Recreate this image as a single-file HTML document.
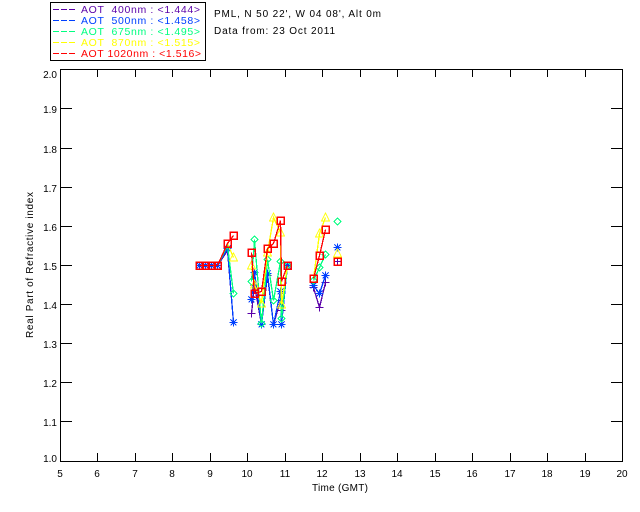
<!DOCTYPE html>
<html>
<head>
<meta charset="utf-8">
<style>
html,body{margin:0;padding:0;background:#fff;width:640px;height:512px;overflow:hidden}
svg{display:block}
text{font-family:"Liberation Sans",sans-serif;font-size:10px;fill:#000;white-space:pre}
.lg{font-size:10.5px}
</style>
</head>
<body>
<svg width="640" height="512" viewBox="0 0 640 512" xmlns="http://www.w3.org/2000/svg" shape-rendering="crispEdges" fill="none">
<defs>
<g id="plus"><path d="M-4 0H4M0 -4V4"/></g>
<g id="star"><path d="M-4 0H4M0 -4V4M-3 -3L3 3M-3 3L3 -3"/></g>
<g id="dia"><path d="M0 -3.5L3.5 0L0 3.5L-3.5 0Z"/></g>
<g id="tri"><path d="M0 -4.5L4 3.5H-4Z"/></g>
<g id="sq"><rect x="-3.5" y="-3.5" width="7" height="7" stroke-width="1.5"/></g>
</defs>

<!-- legend -->
<rect x="50.5" y="2.5" width="155" height="58" stroke="#000"/>
<g stroke-width="1">
<path d="M53 9.5H75" stroke="#5a00a8" stroke-dasharray="6 2"/>
<path d="M53 20.5H75" stroke="#0040ff" stroke-dasharray="6 2"/>
<path d="M53 31.5H75" stroke="#00ff80" stroke-dasharray="6 2"/>
<path d="M53 42.5H75" stroke="#ffff00" stroke-dasharray="6 2"/>
<path d="M53 53.5H75" stroke="#ff0000" stroke-dasharray="6 2"/>
</g>
<text class="lg" x="81" y="13" textLength="119" style="fill:#5a00a8">AOT  400nm : &lt;1.444&gt;</text>
<text class="lg" x="81" y="24" textLength="119" style="fill:#0040ff">AOT  500nm : &lt;1.458&gt;</text>
<text class="lg" x="81" y="35" textLength="119" style="fill:#00ff80">AOT  675nm : &lt;1.495&gt;</text>
<text class="lg" x="81" y="46" textLength="119" style="fill:#ffff00">AOT  870nm : &lt;1.515&gt;</text>
<text class="lg" x="81" y="57" textLength="120" style="fill:#ff0000">AOT 1020nm : &lt;1.516&gt;</text>

<text x="214" y="17" textLength="167">PML, N 50 22', W 04 08', Alt 0m</text>
<text x="214" y="34" textLength="121">Data from: 23 Oct 2011</text>

<!-- axes -->
<rect x="60.5" y="69.5" width="562" height="392" stroke="#000"/>
<path stroke="#000" d="M97.5 70V77M135.5 70V77M172.5 70V77M210.5 70V77M247.5 70V77M285.5 70V77M322.5 70V77M360.5 70V77M397.5 70V77M435.5 70V77M472.5 70V77M510.5 70V77M547.5 70V77M585.5 70V77
M97.5 461V453M135.5 461V453M172.5 461V453M210.5 461V453M247.5 461V453M285.5 461V453M322.5 461V453M360.5 461V453M397.5 461V453M435.5 461V453M472.5 461V453M510.5 461V453M547.5 461V453M585.5 461V453
M61 108.5H72M61 148.5H72M61 187.5H72M61 226.5H72M61 265.5H72M61 304.5H72M61 343.5H72M61 382.5H72M61 421.5H72
M622 108.5H611M622 148.5H611M622 187.5H611M622 226.5H611M622 265.5H611M622 304.5H611M622 343.5H611M622 382.5H611M622 421.5H611"/>

<g text-anchor="end">
<text x="57" y="78">2.0</text>
<text x="57" y="113">1.9</text>
<text x="57" y="153">1.8</text>
<text x="57" y="192">1.7</text>
<text x="57" y="231">1.6</text>
<text x="57" y="270">1.5</text>
<text x="57" y="309">1.4</text>
<text x="57" y="348">1.3</text>
<text x="57" y="387">1.2</text>
<text x="57" y="426">1.1</text>
<text x="57" y="462">1.0</text>
</g>
<g text-anchor="middle">
<text x="60" y="477">5</text><text x="97" y="477">6</text><text x="135" y="477">7</text><text x="172" y="477">8</text>
<text x="210" y="477">9</text><text x="247" y="477">10</text><text x="285" y="477">11</text><text x="322" y="477">12</text>
<text x="360" y="477">13</text><text x="397" y="477">14</text><text x="435" y="477">15</text><text x="472" y="477">16</text>
<text x="510" y="477">17</text><text x="547" y="477">18</text><text x="585" y="477">19</text><text x="622" y="477">20</text>
<text x="340" y="491" textLength="56">Time (GMT)</text>
<text transform="translate(33 265) rotate(-90)" textLength="146">Real Part of Refractive index</text>
</g>

<g transform="translate(.5 .5)">
<!-- purple 400 -->
<g stroke="#5a00a8">
<g stroke-width="1.3">
<polyline points="199,265 217,265 227,250 233,322"/>
<polyline points="251,313 254,285 261,324 267,275 273,324 280,300 281,310 287,265"/>
<polyline points="313,287 319,307 325,282"/>
</g>
<use href="#plus" x="251" y="313"/><use href="#plus" x="254" y="285"/><use href="#plus" x="267" y="275"/><use href="#plus" x="280" y="300"/><use href="#plus" x="281" y="310"/>
<use href="#plus" x="313" y="287"/><use href="#plus" x="319" y="307"/><use href="#plus" x="325" y="282"/><use href="#plus" x="337" y="261"/>
</g>
<!-- blue 500 -->
<g stroke="#0040ff">
<g stroke-width="1.3">
<polyline points="199,265 217,265 227,248 233,322"/>
<polyline points="251,299 254,272 261,324 267,273 273,324 280,291 281,324 287,265"/>
<polyline points="313,285 319,293 325,275"/>
</g>
<use href="#star" x="227" y="248"/><use href="#star" x="233" y="322"/>
<use href="#star" x="251" y="299"/><use href="#star" x="254" y="272"/><use href="#star" x="261" y="324"/><use href="#star" x="267" y="273"/><use href="#star" x="273" y="324"/><use href="#star" x="280" y="291"/><use href="#star" x="281" y="324"/><use href="#star" x="287" y="265"/>
<use href="#star" x="313" y="285"/><use href="#star" x="319" y="293"/><use href="#star" x="325" y="275"/><use href="#star" x="337" y="247"/>
<use href="#star" x="199" y="265"/><use href="#star" x="205" y="265"/><use href="#star" x="211" y="265"/><use href="#star" x="217" y="265"/>
</g>
<!-- green 675 -->
<g stroke="#00ff80">
<g stroke-width="1.3">
<polyline points="217,265 227,245 233,293"/>
<polyline points="251,281 254,239 261,323 267,259 273,300 280,261 281,318 287,265"/>
<polyline points="313,280 319,267 325,254"/>
</g>
<use href="#dia" x="233" y="293"/><use href="#dia" x="251" y="281"/><use href="#dia" x="254" y="239"/><use href="#dia" x="261" y="323"/><use href="#dia" x="267" y="259"/><use href="#dia" x="273" y="300"/><use href="#dia" x="280" y="261"/><use href="#dia" x="281" y="318"/><use href="#dia" x="287" y="265"/>
<use href="#dia" x="313" y="280"/><use href="#dia" x="319" y="267"/><use href="#dia" x="325" y="254"/><use href="#dia" x="337" y="221"/>
</g>
<!-- yellow 870 -->
<g stroke="#ffff00">
<g stroke-width="1.3">
<polyline points="217,265 227,243 233,257"/>
<polyline points="251,265 254,284 261,303 267,252 273,217 280,232 281,304 287,265"/>
<polyline points="313,278 319,233 325,217"/>
</g>
<use href="#tri" x="233" y="257"/><use href="#tri" x="251" y="265"/><use href="#tri" x="254" y="284"/><use href="#tri" x="261" y="303"/><use href="#tri" x="267" y="252"/><use href="#tri" x="273" y="217"/><use href="#tri" x="280" y="232"/><use href="#tri" x="281" y="304"/>
<use href="#tri" x="319" y="233"/><use href="#tri" x="325" y="217"/><use href="#tri" x="337" y="253"/>
</g>
<!-- red 1020 -->
<g stroke="#ff0000">
<g stroke-width="1.3">
<polyline points="199,265 217,265 227,243 233,235"/>
<polyline points="251,252 254,293 261,291 267,248 273,243 280,220 281,281 287,265"/>
<polyline points="313,278 319,255 325,229"/>
</g>
<use href="#sq" x="199" y="265"/><use href="#sq" x="205" y="265"/><use href="#sq" x="211" y="265"/><use href="#sq" x="217" y="265"/>
<use href="#sq" x="227" y="243"/><use href="#sq" x="233" y="235"/>
<use href="#sq" x="251" y="252"/><use href="#sq" x="254" y="293"/><use href="#sq" x="261" y="291"/><use href="#sq" x="267" y="248"/><use href="#sq" x="273" y="243"/><use href="#sq" x="280" y="220"/><use href="#sq" x="281" y="281"/><use href="#sq" x="287" y="265"/>
<use href="#sq" x="313" y="278"/><use href="#sq" x="319" y="255"/><use href="#sq" x="325" y="229"/><use href="#sq" x="337" y="261"/>
</g>
</g>
</svg>
</body>
</html>
